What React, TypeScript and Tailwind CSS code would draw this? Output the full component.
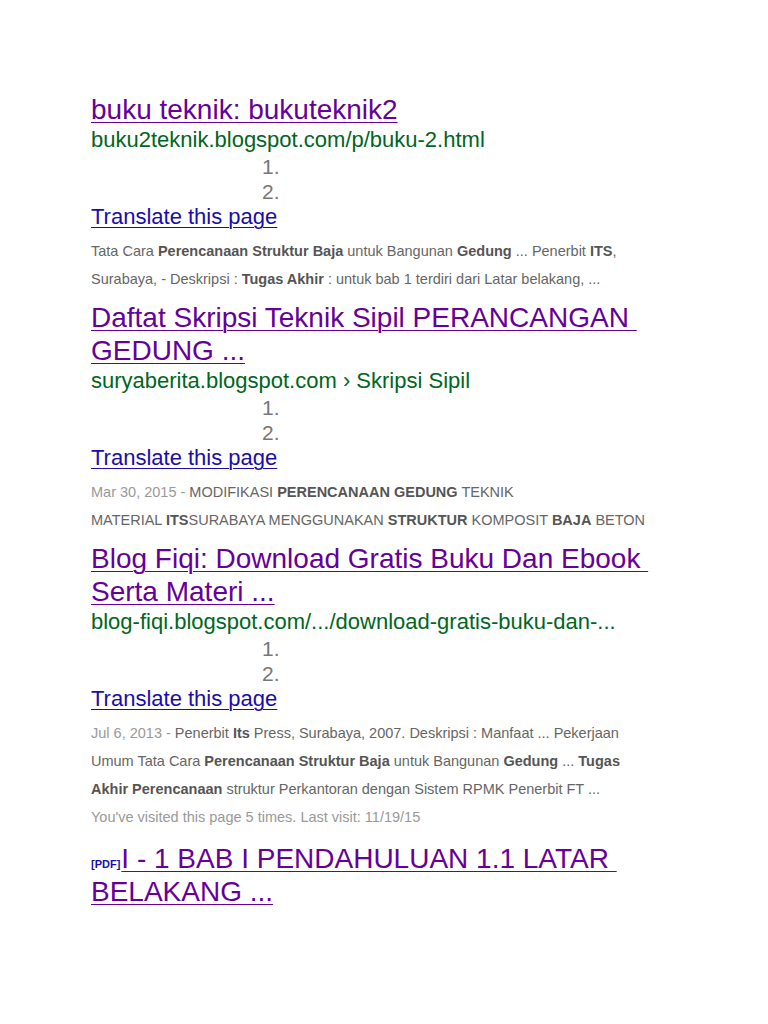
import React from 'react';

type Line = React.ReactNode;

interface Result {
  title: string[];
  url: string;
  snippet: Line[];
}

const results: Result[] = [
  {
    title: ['buku teknik: bukuteknik2'],
    url: 'buku2teknik.blogspot.com/p/buku-2.html',
    snippet: [
      <>
        Tata Cara <b>Perencanaan Struktur Baja</b> untuk Bangunan <b>Gedung</b> ... Penerbit <b>ITS</b>,
      </>,
      <>
        Surabaya, - Deskripsi : <b>Tugas Akhir</b> : untuk bab 1 terdiri dari Latar belakang, ...
      </>,
    ],
  },
  {
    title: ['Daftat Skripsi Teknik Sipil PERANCANGAN\u00a0', 'GEDUNG ...'],
    url: 'suryaberita.blogspot.com › Skripsi Sipil',
    snippet: [
      <>
        <span className="text-[#999]">Mar 30, 2015 - </span>MODIFIKASI <b>PERENCANAAN GEDUNG</b> TEKNIK
      </>,
      <>
        MATERIAL <b>ITS</b>SURABAYA MENGGUNAKAN <b>STRUKTUR</b> KOMPOSIT <b>BAJA</b> BETON
      </>,
    ],
  },
  {
    title: ['Blog Fiqi: Download Gratis Buku Dan Ebook\u00a0', 'Serta Materi ...'],
    url: 'blog-fiqi.blogspot.com/.../download-gratis-buku-dan-...',
    snippet: [
      <>
        <span className="text-[#999]">Jul 6, 2013 - </span>Penerbit <b>Its</b> Press, Surabaya, 2007. Deskripsi : Manfaat ... Pekerjaan
      </>,
      <>
        Umum Tata Cara <b>Perencanaan Struktur Baja</b> untuk Bangunan <b>Gedung</b> ... <b>Tugas</b>
      </>,
      <>
        <b>Akhir Perencanaan</b> struktur Perkantoran dengan Sistem RPMK Penerbit FT ...
      </>,
      <span className="text-[#999]">You've visited this page 5 times. Last visit: 11/19/15</span>,
    ],
  },
];

function Title({ lines, pdf }: { lines: string[]; pdf?: boolean }) {
  return (
    <div className="text-[28px] leading-[33px] text-[#660099]">
      {lines.map((l, i) => (
        <div key={i} className="whitespace-nowrap">
          {pdf && i === 0 && (
            <span className="text-[11px] leading-none font-bold text-[#1a0dab] mr-[1px]">[PDF]</span>
          )}
          <a href="#" className="underline decoration-1 underline-offset-[3px]">
            {l}
          </a>
        </div>
      ))}
    </div>
  );
}

function ResultItem({ r }: { r: Result }) {
  return (
    <div className="mb-[8px]">
      <Title lines={r.title} />
      <div className="text-[22px] leading-[28px] text-[#006621] whitespace-nowrap">{r.url}</div>
      <div className="text-[21px] leading-[25px] text-[#777] pl-[171px]">
        <div>1.</div>
        <div>2.</div>
      </div>
      <a href="#" className="block text-[22px] leading-[25px] text-[#1a0dab] underline decoration-1 underline-offset-[3px]">
        Translate this page
      </a>
      <div className="mt-[8px] text-[14.5px] leading-[28px] text-[#666] [&_b]:text-[#555] [&_b]:font-bold">
        {r.snippet.map((s, i) => (
          <div key={i} className="whitespace-nowrap">
            {s}
          </div>
        ))}
      </div>
    </div>
  );
}

export default function App() {
  return (
    <div className="min-h-[1024px] bg-white pt-[93px] pl-[91px] font-['Liberation_Sans',Arial,sans-serif]">
      {results.map((r, i) => (
        <ResultItem key={i} r={r} />
      ))}
      <div className="pt-[3px]">
        <Title lines={['I - 1 BAB I PENDAHULUAN 1.1 LATAR\u00a0', 'BELAKANG ...']} pdf />
      </div>
    </div>
  );
}
